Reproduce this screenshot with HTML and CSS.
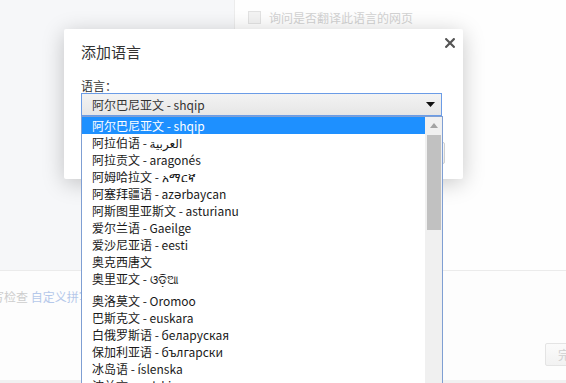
FILE: index.html
```html
<!DOCTYPE html>
<html lang="zh-CN">
<head>
<meta charset="utf-8">
<title>添加语言</title>
<link rel="stylesheet" href="styles.css">
</head>
<body>
<div class="page">
  <div class="top">
    <div class="sidebar"></div>
    <div class="main">
      <label class="check-row"><span class="checkbox"></span><span>询问是否翻译此语言的网页</span></label>
    </div>
  </div>
  <div class="spell"><span class="muted">拼写检查</span> <span class="link">自定义拼写字典</span></div>
  <div class="footer"><span class="done-btn">完成</span></div>
  <div class="bottom-band"></div>
</div>

<div class="dialog">
  <div class="dlg-title">添加语言</div>
  <span class="dlg-close"><svg width="10" height="10" viewBox="0 0 10 10"><path d="M1.2 1.2 L8.8 8.8 M8.8 1.2 L1.2 8.8" stroke="#555" stroke-width="2.2" stroke-linecap="square"/></svg></span>
  <div class="dlg-label">语言：</div>
  <div class="select"><span>阿尔巴尼亚文 - shqip</span><svg class="caret" width="9" height="5" viewBox="0 0 9 5"><path d="M0 0 H9 L4.5 5 Z" fill="#111"/></svg></div>
  <div class="dlg-buttons"><span class="btn">添加</span><span class="btn">取消</span></div>
</div>

<div class="dropdown">
  <ul class="options">
    <li class="sel">阿尔巴尼亚文 - shqip</li>
    <li>阿拉伯语 - <span dir="rtl">العربية</span></li>
    <li>阿拉贡文 - aragonés</li>
    <li>阿姆哈拉文 - አማርኛ</li>
    <li>阿塞拜疆语 - azərbaycan</li>
    <li>阿斯图里亚斯文 - asturianu</li>
    <li>爱尔兰语 - Gaeilge</li>
    <li>爱沙尼亚语 - eesti</li>
    <li>奥克西唐文</li>
    <li class="tall">奥里亚文 - ଓଡ଼ିଆ</li>
    <li>奥洛莫文 - Oromoo</li>
    <li>巴斯克文 - euskara</li>
    <li>白俄罗斯语 - беларуская</li>
    <li>保加利亚语 - български</li>
    <li>冰岛语 - íslenska</li>
    <li>波兰文 - polski</li>
  </ul>
  <div class="scrollbar">
    <div class="sb-up"><svg width="8" height="5" viewBox="0 0 8 5"><path d="M0 5 L4 0 L8 5 Z" fill="#a3a3a3"/></svg></div>
    <div class="sb-thumb"></div>
  </div>
</div>
</body>
</html>
```
FILE: styles.css
```css
html, body {
  margin: 0;
  padding: 0;
  overflow: hidden;
  width: 566px;
  height: 383px;
  background: #fdfdfd;
  font-family: "Noto Sans CJK SC", "DejaVu Sans", sans-serif;
  font-size: 12px;
  color: #222;
}

.page {
  width: 600px;
  height: 383px;
  display: flex;
  flex-direction: column;
}

.top {
  display: flex;
  height: 270px;
  border-bottom: 1px solid #ebebeb;
}

.sidebar {
  width: 234px;
  background: #f6f7f9;
  border-right: 1px solid #ececec;
}

.main {
  flex: 1;
  padding: 11px 0 0 13px;
  background: #fefefe;
}

.check-row {
  display: flex;
  align-items: center;
  gap: 8px;
  color: #d2d2d2;
  line-height: 13px;
}

.checkbox {
  width: 11px;
  height: 11px;
  border: 1px solid #e2e2e2;
  background: #f3f3f3;
}

.spell {
  margin-left: -20px;
  padding-top: 18px;
  line-height: 16px;
  height: 16px;
  white-space: nowrap;
}

.muted { color: #cdcdcd; }
.link { color: #b5c8ea; }

.footer {
  flex: 1;
  display: flex;
  justify-content: flex-end;
  align-items: flex-start;
  padding: 38px 5px 0 0;
}

.done-btn {
  box-sizing: border-box;
  width: 50px;
  height: 23px;
  line-height: 21px;
  text-align: center;
  border: 1px solid #e4e4e4;
  border-radius: 2px;
  background: linear-gradient(#fbfbfb, #f2f2f2);
  color: #cfcfcf;
}

.bottom-band {
  height: 3px;
  background: #f1f1f1;
}

/* dialog overlay */
.dialog {
  position: absolute;
  left: 64px;
  top: 29px;
  width: 399px;
  height: 150px;
  box-sizing: border-box;
  padding: 14px 18px 0 17px;
  background: #fff;
  border-radius: 2px;
  box-shadow: 0 4px 22px rgba(0, 0, 0, 0.22);
  display: flex;
  flex-direction: column;
}

.dlg-title {
  font-size: 15px;
  line-height: 18px;
  color: #333;
}

.dlg-close {
  position: absolute;
  top: 9px;
  right: 8px;
  width: 10px;
  height: 10px;
  display: block;
}
.dlg-close svg { display: block; }

.dlg-label {
  margin-top: 17px;
  line-height: 15px;
  color: #333;
}

.select {
  box-sizing: border-box;
  height: 23px;
  margin-right: 3px;
  border: 1px solid #6b9ce6;
  background: linear-gradient(#f3f3f3, #e6e6e6);
  display: flex;
  align-items: center;
  justify-content: space-between;
  padding: 0 6px 0 10px;
  color: #333;
}
.caret { display: block; }

.dlg-buttons {
  margin-top: 26px;
  display: flex;
  justify-content: flex-end;
  gap: 8px;
}

.btn {
  box-sizing: border-box;
  height: 22px;
  width: 56px;
  line-height: 20px;
  text-align: center;
  border: 1px solid #cfcfcf;
  border-radius: 2px;
  background: linear-gradient(#fafafa, #ededed);
  color: #444;
}

/* open select list overlay */
.dropdown {
  position: absolute;
  left: 81px;
  top: 116px;
  width: 362px;
  height: 290px;
  box-sizing: border-box;
  border: 1px solid #7f9fd3;
  background: #fff;
  display: flex;
}

.options {
  flex: 1;
  margin: 0;
  padding: 0;
  list-style: none;
}

.options li {
  height: 17px;
  line-height: 17px;
  padding-left: 10px;
  white-space: nowrap;
  color: #1a1a1a;
}

.options li.sel {
  background: #1e90ff;
  color: #fff;
}

.options li.tall {
  height: 22px;
}

.scrollbar {
  width: 17px;
  background: #f0f0f0;
  display: flex;
  flex-direction: column;
}

.sb-up {
  height: 17px;
  display: flex;
  align-items: center;
  justify-content: center;
}
.sb-up svg { display: block; }

.sb-thumb {
  height: 95px;
  margin: 1px 1px 0 2px;
  background: #c1c1c1;
}
```
